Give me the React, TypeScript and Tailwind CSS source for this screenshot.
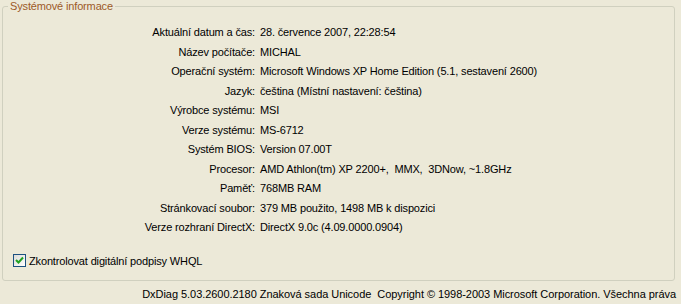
import React from "react";

const rows: [string, string][] = [
  ["Aktuální datum a čas:", "28. července 2007, 22:28:54"],
  ["Název počítače:", "MICHAL"],
  ["Operační systém:", "Microsoft Windows XP Home Edition (5.1, sestavení 2600)"],
  ["Jazyk:", "čeština (Místní nastavení: čeština)"],
  ["Výrobce systému:", "MSI"],
  ["Verze systému:", "MS-6712"],
  ["Systém BIOS:", "Version 07.00T"],
  ["Procesor:", "AMD Athlon(tm) XP 2200+,  MMX,  3DNow, ~1.8GHz"],
  ["Paměť:", "768MB RAM"],
  ["Stránkovací soubor:", "379 MB použito, 1498 MB k dispozici"],
  ["Verze rozhraní DirectX:", "DirectX 9.0c (4.09.0000.0904)"],
];

export default function App() {
  return (
    <div
      className="w-[681px] h-[304px] bg-[#ECE9D8] overflow-hidden text-[11px] text-black flex flex-col"
      style={{ fontFamily: '"Liberation Sans", Arial, sans-serif' }}
    >
      <fieldset className="ml-[2px] w-[673px] h-[281px] border border-[#D0D0BF] rounded-[3px] px-0 pt-[9px] pb-0 m-0 tracking-[-0.15px]">
        <legend className="ml-[5px] px-[2px] text-[#9C5A28] leading-[13px]">Systémové informace</legend>
        <div className="grid grid-cols-[252px_1fr] gap-x-[5px] leading-[19.5px] mt-[1px]">
          {rows.map(([k, v]) => (
            <React.Fragment key={k}>
              <div className="text-right whitespace-pre">{k}</div>
              <div className="whitespace-pre">{v}</div>
            </React.Fragment>
          ))}
        </div>
        <div className="flex items-center mt-[15px] ml-[10px]">
          <div className="w-[13px] h-[13px] border border-[#1C5180] bg-gradient-to-br from-[#DCDCD7] to-[#FFFFFF] flex items-center justify-center">
            <svg width="9" height="9" viewBox="0 0 9 9">
              <path d="M1 4 L3.5 6.5 L8 1.5" stroke="#21A121" strokeWidth="2" fill="none" />
            </svg>
          </div>
          <span className="ml-[3px]">Zkontrolovat digitální podpisy WHQL</span>
        </div>
      </fieldset>
      <div className="flex justify-end pr-[5px] mt-[7px] whitespace-pre leading-[13px] tracking-[-0.05px]">
        DxDiag 5.03.2600.2180 Znaková sada Unicode  Copyright © 1998-2003 Microsoft Corporation. Všechna práva
      </div>
    </div>
  );
}
